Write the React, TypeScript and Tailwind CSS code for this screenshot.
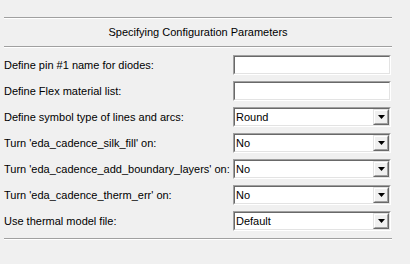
import React from 'react';

// rows of the parameter form
const rows: { label: string; kind: 'text' | 'select'; value?: string }[] = [
  { label: 'Define pin #1 name for diodes:', kind: 'text' },
  { label: 'Define Flex material list:', kind: 'text' },
  { label: 'Define symbol type of lines and arcs:', kind: 'select', value: 'Round' },
  { label: "Turn 'eda_cadence_silk_fill' on:", kind: 'select', value: 'No' },
  { label: "Turn 'eda_cadence_add_boundary_layers' on:", kind: 'select', value: 'No' },
  { label: "Turn 'eda_cadence_therm_err' on:", kind: 'select', value: 'No' },
  { label: 'Use thermal model file:', kind: 'select', value: 'Default' },
];

function Etched() {
  return <div className="h-[2px] border-t border-b border-t-[#a0a0a0] border-b-white" />;
}

function Sunken({ children }: { children?: React.ReactNode }) {
  return (
    <div className="w-[158px] h-[20px] border border-t-[#a0a0a0] border-l-[#a0a0a0] border-b-white border-r-white">
      <div className="h-full border border-t-[#696969] border-l-[#696969] border-b-[#e3e3e3] border-r-[#e3e3e3] bg-white flex items-center">
        {children}
      </div>
    </div>
  );
}

function DropButton() {
  return (
    <div className="w-[16px] h-[16px] border border-t-[#e3e3e3] border-l-[#e3e3e3] border-b-[#696969] border-r-[#696969]">
      <div className="h-full border border-t-white border-l-white border-b-[#a0a0a0] border-r-[#a0a0a0] bg-[#f0f0f0] flex items-center justify-center">
        <svg width="7" height="4" viewBox="0 0 7 4">
          <path d="M0 0h7L3.5 4z" fill="#000" />
        </svg>
      </div>
    </div>
  );
}

export default function App() {
  return (
    <div
      className="w-[410px] h-[264px] bg-[#f0f0f0] text-black text-[11px] overflow-hidden"
      style={{ fontFamily: '"Liberation Sans", Arial, sans-serif' }}
    >
      <div className="ml-[4px] w-[388px] pt-[17px] flex flex-col">
        <Etched />
        <div className="h-[27px] flex items-center justify-center">Specifying Configuration Parameters</div>
        <Etched />

        <div className="pt-[7px] flex flex-col gap-[6px]">
          {rows.map((r) => (
            <div key={r.label} className="flex items-center h-[20px]">
              <div className="w-[229px] whitespace-nowrap">{r.label}</div>
              <Sunken>
                {r.kind === 'select' && (
                  <>
                    <span className="flex-1 pl-[1px]">{r.value}</span>
                    <DropButton />
                  </>
                )}
              </Sunken>
            </div>
          ))}
        </div>

        <div className="mt-[7px]">
          <Etched />
        </div>
      </div>
    </div>
  );
}
